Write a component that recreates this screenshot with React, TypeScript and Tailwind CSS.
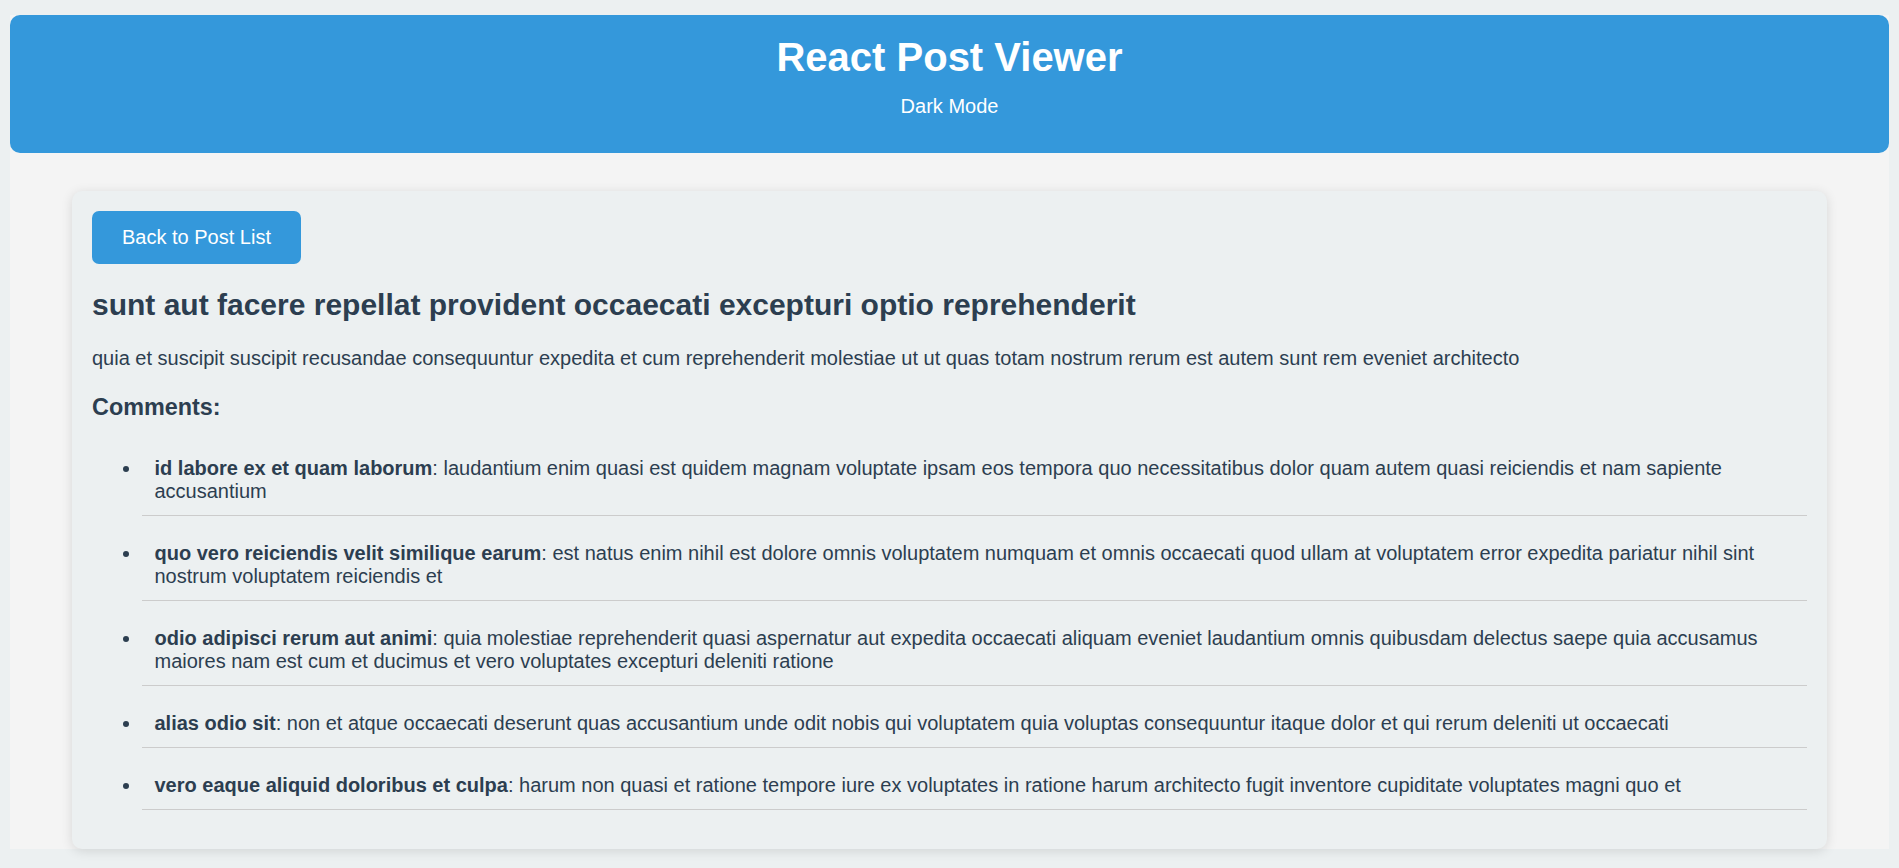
import React from "react";

const comments = [
  {
    name: "id labore ex et quam laborum",
    body: "laudantium enim quasi est quidem magnam voluptate ipsam eos tempora quo necessitatibus dolor quam autem quasi reiciendis et nam sapiente accusantium",
  },
  {
    name: "quo vero reiciendis velit similique earum",
    body: "est natus enim nihil est dolore omnis voluptatem numquam et omnis occaecati quod ullam at voluptatem error expedita pariatur nihil sint nostrum voluptatem reiciendis et",
  },
  {
    name: "odio adipisci rerum aut animi",
    body: "quia molestiae reprehenderit quasi aspernatur aut expedita occaecati aliquam eveniet laudantium omnis quibusdam delectus saepe quia accusamus maiores nam est cum et ducimus et vero voluptates excepturi deleniti ratione",
  },
  {
    name: "alias odio sit",
    body: "non et atque occaecati deserunt quas accusantium unde odit nobis qui voluptatem quia voluptas consequuntur itaque dolor et qui rerum deleniti ut occaecati",
  },
  {
    name: "vero eaque aliquid doloribus et culpa",
    body: "harum non quasi et ratione tempore iure ex voluptates in ratione harum architecto fugit inventore cupiditate voluptates magni quo et",
  },
];

export default function App() {
  return (
    <div className="min-h-screen bg-[#ecf0f1] px-[10px] pt-[15px] font-['Liberation_Sans',Arial,sans-serif]">
      <div className="bg-[#f4f4f4]">
        <header className="box-border h-[138px] rounded-[10px] bg-[#3498db] pt-[19px] text-center text-white">
          <h1 className="text-[40px] font-bold leading-[46px]">React Post Viewer</h1>
          <p className="mt-[15px] text-[20px] leading-[23px]">Dark Mode</p>
        </header>
        <div className="mx-[62px] mt-[38px] rounded-[10px] bg-[#ecf0f1] p-[20px] text-[#2c3e50] shadow-[0_2px_12px_rgba(0,0,0,0.12)]">
          <button className="rounded-[7px] bg-[#3498db] px-[30px] py-[15px] text-[20px] leading-[23px] text-white">
            Back to Post List
          </button>
          <h2 className="mt-[24px] text-[30px] font-bold leading-[34.5px]">
            sunt aut facere repellat provident occaecati excepturi optio reprehenderit
          </h2>
          <p className="mt-[24.7px] text-[20px] leading-[23px]">
            quia et suscipit suscipit recusandae consequuntur expedita et cum reprehenderit molestiae ut ut quas totam nostrum rerum est autem sunt rem eveniet architecto
          </p>
          <h3 className="mt-[24px] text-[23.4px] font-bold leading-[27px]">Comments:</h3>
          <ul className="mt-[23px] mb-[19px] flex list-disc flex-col gap-[13px] pl-[50px]">
            {comments.map((c) => (
              <li
                key={c.name}
                className="border-b border-[#cccccc] py-[12.5px] pl-[12.5px] text-[20px] leading-[23px]"
              >
                <strong className="font-bold">{c.name}</strong>: {c.body}
              </li>
            ))}
          </ul>
        </div>
      </div>
    </div>
  );
}
